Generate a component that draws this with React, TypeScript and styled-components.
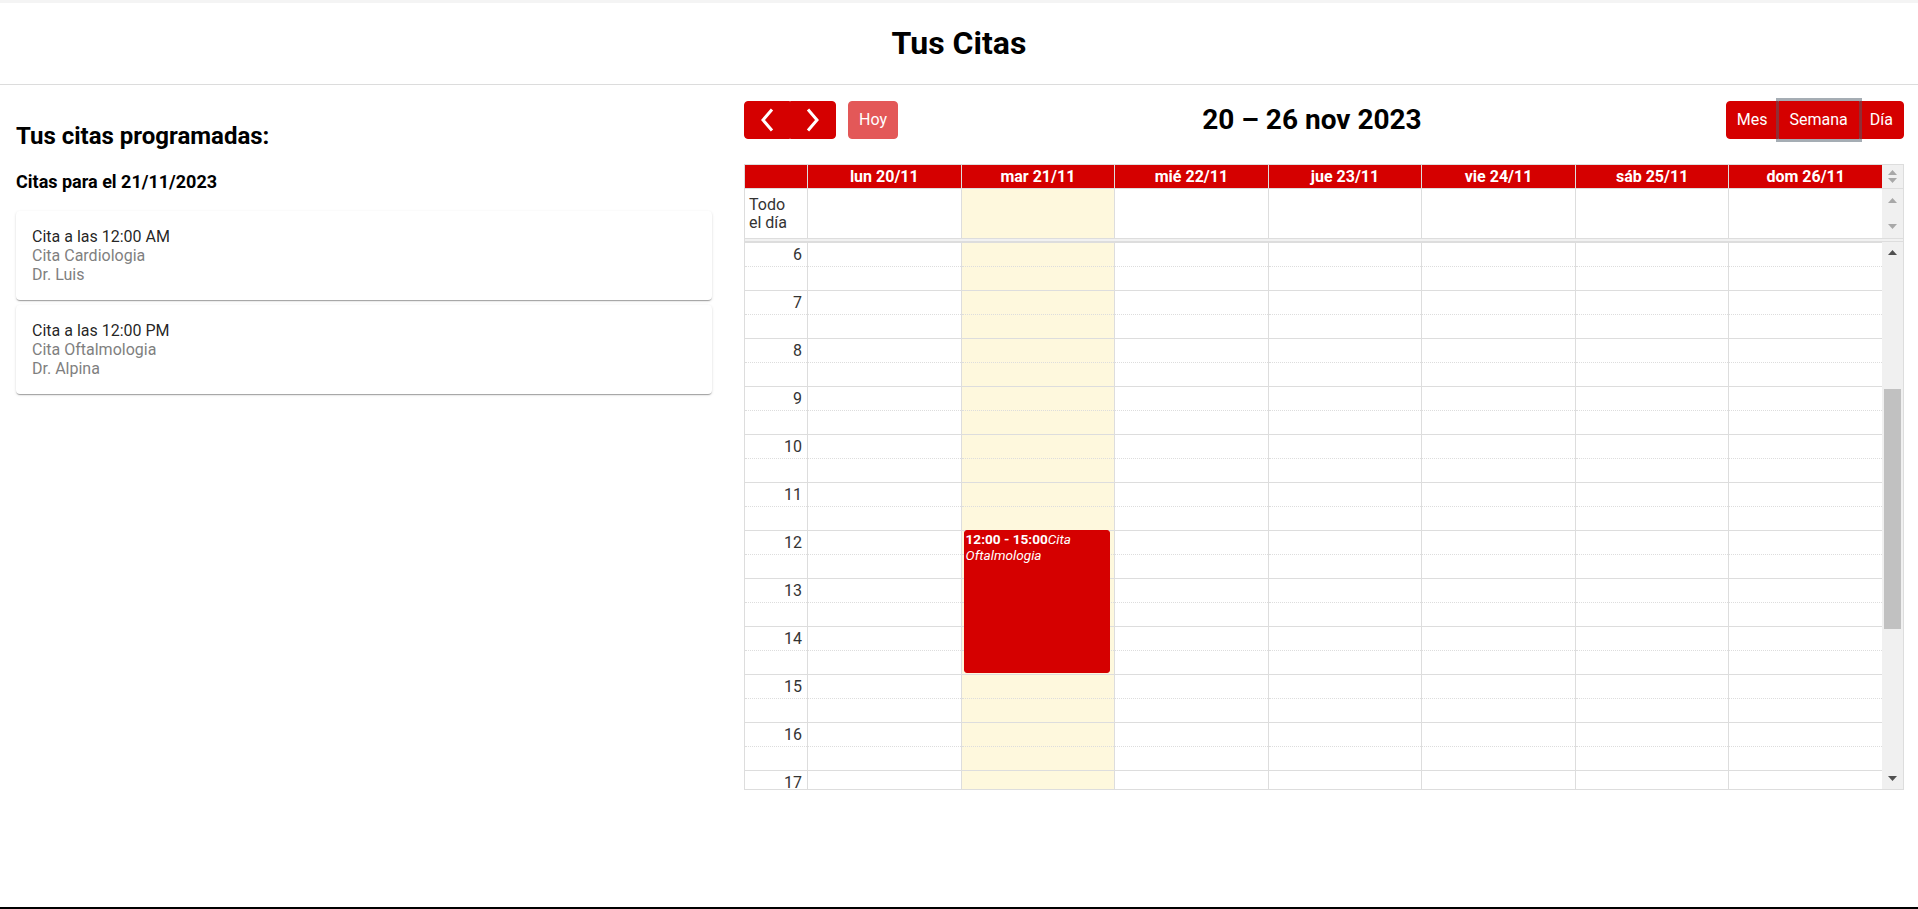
import React, { useLayoutEffect, useRef } from "react";
import styled, { createGlobalStyle } from "styled-components";

const RED = "#d50000";
const LINE = "#dddddd";
const SLOT_H = 24;
const BODY_H = 547;
const GUTTER = 21;
const ARROW_H = 21;
const SCROLL_TOP = 6 * 2 * SLOT_H;
const CONTENT_H = 48 * SLOT_H;

const GlobalStyle = createGlobalStyle`
  html, body {
    margin: 0;
    padding: 0;
    background: #ffffff;
    font-family: Roboto, "Liberation Sans", Arial, sans-serif;
    color: rgba(0, 0, 0, 0.87);
  }
  * {
    box-sizing: border-box;
  }
`;

const Page = styled.div`
  min-height: 100vh;
  display: flex;
  flex-direction: column;
  border-bottom: 2px solid #000;
`;

const TopStrip = styled.div`
  height: 3px;
  background: #f4f4f4;
`;

const Header = styled.header`
  height: 82px;
  display: flex;
  align-items: center;
  justify-content: center;
  border-bottom: 1px solid #dcdcdc;
`;

const PageTitle = styled.h1`
  margin: 0;
  font-size: 32px;
  font-weight: 700;
  line-height: 1.17;
  color: #000;
`;

const Main = styled.main`
  display: grid;
  grid-template-columns: 696px 1fr;
  gap: 32px;
  padding: 16px 14px 0 16px;
`;

const LeftColumn = styled.section`
  display: flex;
  flex-direction: column;
`;

const SectionTitle = styled.h2`
  margin: 21px 0 0;
  font-size: 24px;
  font-weight: 700;
  line-height: 1.2;
  color: #000;
`;

const DayTitle = styled.h3`
  margin: 20px 0 0;
  font-size: 18px;
  font-weight: 700;
  line-height: 1.2;
  color: #000;
`;

const CardList = styled.div`
  display: flex;
  flex-direction: column;
  gap: 5px;
  margin-top: 19px;
`;

const Card = styled.div`
  background: #fff;
  border-radius: 4px;
  padding: 16px 13px 16px 16px;
  box-shadow: 0px 2px 1px -1px rgba(0, 0, 0, 0.2),
    0px 1px 1px 0px rgba(0, 0, 0, 0.14), 0px 1px 3px 0px rgba(0, 0, 0, 0.12);
`;

const CardLine = styled.div<{ $muted?: boolean }>`
  font-size: 16px;
  line-height: 19px;
  color: ${(p) => (p.$muted ? "#7f7f7f" : "rgba(0, 0, 0, 0.87)")};
`;

const RightColumn = styled.section`
  display: flex;
  flex-direction: column;
  font-size: 16px;
`;

const Toolbar = styled.div`
  display: flex;
  align-items: center;
  justify-content: space-between;
  margin-bottom: 25px;
`;

const ToolbarChunk = styled.div`
  display: flex;
  align-items: center;
  gap: 12px;
`;

const ButtonGroup = styled.div`
  display: inline-flex;
`;

const Button = styled.button<{ $focused?: boolean; $disabled?: boolean }>`
  position: relative;
  z-index: ${(p) => (p.$focused ? 1 : 0)};
  display: inline-flex;
  align-items: center;
  justify-content: center;
  height: 38px;
  padding: 0 10px;
  background: ${RED};
  border: 1px solid ${RED};
  color: #fff;
  font-family: inherit;
  font-size: 16px;
  line-height: 1.5;
  border-radius: 4px;
  opacity: ${(p) => (p.$disabled ? 0.65 : 1)};
  box-shadow: ${(p) =>
    p.$focused ? "0 0 0 3px rgba(76, 91, 106, 0.5)" : "none"};
  cursor: pointer;

  ${ButtonGroup} > & {
    border-radius: 0;
  }
  ${ButtonGroup} > &:first-child {
    border-radius: 4px 0 0 4px;
  }
  ${ButtonGroup} > &:last-child {
    border-radius: 0 4px 4px 0;
  }
`;

const CalTitle = styled.h2`
  margin: 0;
  font-size: 28px;
  font-weight: 700;
  color: #000;
  line-height: 1.2;
`;

const Table = styled.div`
  border: 1px solid ${LINE};
  display: flex;
  flex-direction: column;
`;

const Row = styled.div`
  display: grid;
  grid-template-columns: 62px repeat(7, 1fr) ${GUTTER}px;
`;

const BodyRow = styled.div`
  display: grid;
  grid-template-columns: 1fr ${GUTTER}px;
  height: ${BODY_H}px;
`;

const Viewport = styled.div`
  height: ${BODY_H}px;
  overflow: hidden;
`;

const SlotGrid = styled.div`
  display: grid;
  grid-template-columns: 62px repeat(7, 1fr);
`;

const HeadCell = styled.div<{ $first?: boolean }>`
  background: ${RED};
  color: #fff;
  font-weight: 700;
  text-align: center;
  padding: 2px 4px;
  line-height: 19px;
  height: 24px;
  white-space: nowrap;
  border-left: ${(p) => (p.$first ? "none" : `1px solid ${LINE}`)};
  border-bottom: 1px solid ${LINE};
`;

const AllDayAxis = styled.div`
  height: 49px;
  display: flex;
  align-items: center;
  padding: 0 4px;
  color: #333;
  line-height: 18px;
`;

const AllDayCell = styled.div<{ $today?: boolean }>`
  height: 49px;
  border-left: 1px solid ${LINE};
  background: ${(p) => (p.$today ? "#fef8dd" : "transparent")};
`;

const Gutter = styled.div<{ $spread?: boolean }>`
  background: #f0f0f0;
  display: flex;
  flex-direction: column;
  align-items: center;
  justify-content: ${(p) => (p.$spread ? "space-between" : "center")};
  padding: ${(p) => (p.$spread ? "9px 0 9px" : "0")};
  gap: ${(p) => (p.$spread ? "0" : "3px")};
  border-bottom: ${(p) => (p.$spread ? "none" : `1px solid ${LINE}`)};
`;

const ScrollBar = styled.div`
  background: #f0f0f0;
  display: flex;
  flex-direction: column;
  height: ${BODY_H}px;
`;

const ScrollButton = styled.div`
  height: ${ARROW_H}px;
  flex-shrink: 0;
  display: flex;
  align-items: center;
  justify-content: center;
`;

const Thumb = styled.div`
  margin: 0 2px;
  flex-shrink: 0;
  background: #c1c1c1;
`;

const Track = styled.div`
  flex: 1;
  display: flex;
  flex-direction: column;
`;

const Divider = styled.div`
  height: 4px;
  border-top: 1px solid ${LINE};
  border-bottom: 1px solid ${LINE};
  background: rgba(208, 208, 208, 0.3);
`;

const Column = styled.div<{ $today?: boolean; $axis?: boolean }>`
  position: relative;
  display: flex;
  flex-direction: column;
  border-left: ${(p) => (p.$axis ? "none" : `1px solid ${LINE}`)};
  background: ${(p) => (p.$today ? "#fef8dd" : "transparent")};
`;

const Slot = styled.div<{ $minor: boolean; $first: boolean }>`
  height: ${SLOT_H}px;
  border-top: ${(p) =>
    p.$first ? "none" : `1px ${p.$minor ? "dotted" : "solid"} ${LINE}`};
`;

const SlotLabel = styled.div<{ $minor: boolean; $first: boolean }>`
  height: ${SLOT_H}px;
  border-top: ${(p) =>
    p.$first ? "none" : `1px ${p.$minor ? "dotted" : "solid"} ${LINE}`};
  text-align: right;
  padding: 0 5px 0 4px;
  line-height: 23px;
  color: #333;
`;

const Event = styled.div`
  position: absolute;
  left: 2px;
  right: 4px;
  background: ${RED};
  border: 1px solid ${RED};
  border-radius: 3px;
  color: #fff;
  font-size: 13.6px;
  line-height: 15.7px;
  padding: 1px 1px 0;
  overflow: hidden;
`;

const Chevron = ({ dir }: { dir: "left" | "right" }) => (
  <svg width="24" height="24" viewBox="0 0 24 24">
    <polyline
      points={dir === "left" ? "17,1.5 8,12 17,22.5" : "7,1.5 16,12 7,22.5"}
      fill="none"
      stroke="#fff"
      strokeWidth="3"
    />
  </svg>
);

const Arrow = ({ up, color }: { up?: boolean; color: string }) => (
  <svg width="9" height="5" viewBox="0 0 9 5">
    <polygon points={up ? "0,5 4.5,0 9,5" : "0,0 4.5,5 9,0"} fill={color} />
  </svg>
);

const days = [
  "lun 20/11",
  "mar 21/11",
  "mié 22/11",
  "jue 23/11",
  "vie 24/11",
  "sáb 25/11",
  "dom 26/11",
];
const TODAY = 1;

const appointments = [
  { time: "12:00 AM", title: "Cita Cardiologia", doctor: "Dr. Luis" },
  { time: "12:00 PM", title: "Cita Oftalmologia", doctor: "Dr. Alpina" },
];

const slots = Array.from({ length: 48 }, (_, i) => i);

const trackH = BODY_H - 2 * ARROW_H;
const thumbH = Math.round((trackH * BODY_H) / CONTENT_H);
const thumbTop = Math.round((trackH * SCROLL_TOP) / CONTENT_H);

export default function App() {
  const bodyRef = useRef<HTMLDivElement>(null);

  useLayoutEffect(() => {
    if (bodyRef.current) bodyRef.current.scrollTop = SCROLL_TOP;
  }, []);

  return (
    <Page>
      <GlobalStyle />
      <TopStrip />
      <Header>
        <PageTitle>Tus Citas</PageTitle>
      </Header>
      <Main>
        <LeftColumn>
          <SectionTitle>Tus citas programadas:</SectionTitle>
          <DayTitle>Citas para el 21/11/2023</DayTitle>
          <CardList>
            {appointments.map((a) => (
              <Card key={a.time}>
                <CardLine>Cita a las {a.time}</CardLine>
                <CardLine $muted>{a.title}</CardLine>
                <CardLine $muted>{a.doctor}</CardLine>
              </Card>
            ))}
          </CardList>
        </LeftColumn>

        <RightColumn>
          <Toolbar>
            <ToolbarChunk>
              <ButtonGroup>
                <Button aria-label="prev">
                  <Chevron dir="left" />
                </Button>
                <Button aria-label="next">
                  <Chevron dir="right" />
                </Button>
              </ButtonGroup>
              <Button $disabled>Hoy</Button>
            </ToolbarChunk>
            <CalTitle>20 – 26 nov 2023</CalTitle>
            <ButtonGroup>
              <Button>Mes</Button>
              <Button $focused>Semana</Button>
              <Button>Día</Button>
            </ButtonGroup>
          </Toolbar>

          <Table>
            <Row>
              <HeadCell $first />
              {days.map((d) => (
                <HeadCell key={d}>{d}</HeadCell>
              ))}
              <Gutter>
                <Arrow up color="#a8a8a8" />
                <Arrow color="#a8a8a8" />
              </Gutter>
            </Row>
            <Row>
              <AllDayAxis>
                Todo
                <br />
                el día
              </AllDayAxis>
              {days.map((d, i) => (
                <AllDayCell key={d} $today={i === TODAY} />
              ))}
              <Gutter $spread>
                <Arrow up color="#a8a8a8" />
                <Arrow color="#a8a8a8" />
              </Gutter>
            </Row>
            <Divider />
            <BodyRow>
              <Viewport ref={bodyRef}>
                <SlotGrid>
                  <Column $axis>
                    {slots.map((s) => (
                      <SlotLabel key={s} $minor={s % 2 === 1} $first={s === 0}>
                        {s % 2 === 0 ? s / 2 : ""}
                      </SlotLabel>
                    ))}
                  </Column>
                  {days.map((d, i) => (
                    <Column key={d} $today={i === TODAY}>
                      {slots.map((s) => (
                        <Slot key={s} $minor={s % 2 === 1} $first={s === 0} />
                      ))}
                      {i === TODAY && (
                        <Event style={{ top: 24 * SLOT_H, height: 6 * SLOT_H - 1 }}>
                          <b>12:00 - 15:00</b>
                          <i>Cita Oftalmologia</i>
                        </Event>
                      )}
                    </Column>
                  ))}
                </SlotGrid>
              </Viewport>
              <ScrollBar>
                <ScrollButton>
                  <Arrow up color="#505050" />
                </ScrollButton>
                <Track>
                  <div style={{ height: thumbTop, flexShrink: 0 }} />
                  <Thumb style={{ height: thumbH }} />
                </Track>
                <ScrollButton>
                  <Arrow color="#505050" />
                </ScrollButton>
              </ScrollBar>
            </BodyRow>
          </Table>
        </RightColumn>
      </Main>
    </Page>
  );
}
